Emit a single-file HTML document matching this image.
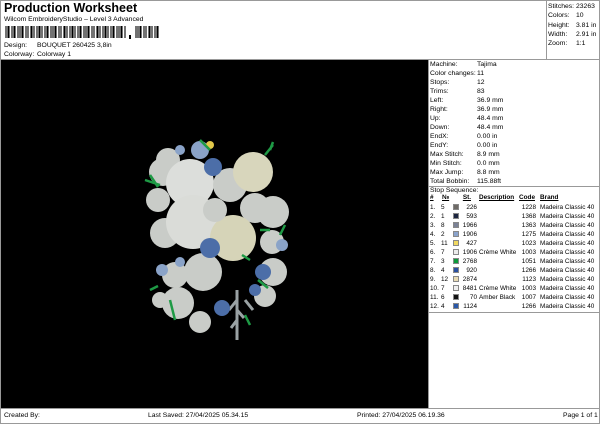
<!DOCTYPE html><html><head><meta charset="utf-8"><style>
*{margin:0;padding:0;box-sizing:border-box}
body{width:600px;height:424px;background:#fff;font-family:"Liberation Sans",sans-serif;font-size:6.8px;color:#000;position:relative;overflow:hidden}
.a{position:absolute;white-space:nowrap}
.t{font-size:6.4px}
.l{position:absolute;background:#999}
.sw{position:absolute;width:6px;height:6px;border:1px solid #888}
</style></head><body>
<div class="a" style="left:4px;top:1px;font-size:12.5px;font-weight:bold">Production Worksheet</div>
<div class="a" style="left:4px;top:16px">Wilcom EmbroideryStudio – Level 3 Advanced</div>
<svg class="a" style="left:4px;top:26px" width="160" height="14">
<path d="M2 0v12M4 0v12M5 0v12M8 0v12M10 0v12M11 0v12M14 0v12M16 0v12M18 0v12M19 0v12M22 0v12M24 0v12M27 0v12M28 0v12M30 0v12M33 0v12M35 0v12M36 0v12M38 0v12M41 0v12M43 0v12M44 0v12M47 0v12M49 0v12M51 0v12M52 0v12M55 0v12M57 0v12M60 0v12M61 0v12M63 0v12M66 0v12M68 0v12M69 0v12M71 0v12M74 0v12M76 0v12M77 0v12M80 0v12M82 0v12M84 0v12M85 0v12M88 0v12M90 0v12M93 0v12M94 0v12M96 0v12M99 0v12M101 0v12M102 0v12M104 0v12M107 0v12M109 0v12M110 0v12M113 0v12M115 0v12M117 0v12M118 0v12M121 0v12M132 0v12M134 0v12M136 0v12M137 0v12M140 0v12M142 0v12M145 0v12M146 0v12M148 0v12M151 0v12M153 0v12M154 0v12" stroke="#000" stroke-width="1.1"/>
<rect x="125" y="9" width="2" height="4" fill="#000"/></svg>
<div class="a" style="left:4px;top:42px">Design:</div><div class="a" style="left:37px;top:42px">BOUQUET 260425 3,8in</div>
<div class="a" style="left:4px;top:51px">Colorway:</div><div class="a" style="left:37px;top:51px">Colorway 1</div>
<div class="l" style="left:546px;top:0;width:1px;height:59px"></div>
<div class="l" style="left:0;top:59px;width:600px;height:1px"></div>
<div class="l" style="left:599px;top:0;width:1px;height:424px"></div>
<div class="l" style="left:0;top:0;width:600px;height:1px"></div>
<div class="a" style="left:548px;top:2px;line-height:9.3px">Stitches:<br>Colors:<br>Height:<br>Width:<br>Zoom:</div>
<div class="a" style="left:576px;top:2px;line-height:9.3px">23263<br>10<br>3.81 in<br>2.91 in<br>1:1</div>
<div class="a" style="left:0;top:60px;width:428px;height:348px;background:#000"></div>
<svg class="a" style="left:0;top:60px" width="428" height="348" viewBox="0 60 428 348">
<path d="M237 290v50M237 300l-8 10M237 310l7 8M237 320l-6 8M245 300l8 10" stroke="#9aa2a4" stroke-width="3" fill="none"/>
<g fill="#c9ccc8">
<circle cx="168" cy="160" r="12"/><circle cx="163" cy="172" r="14"/><circle cx="158" cy="200" r="12"/><circle cx="165" cy="233" r="15"/>
<circle cx="200" cy="150" r="9" fill="#8aa3c8"/>
<circle cx="190" cy="183" r="24" fill="#dcdedb"/><circle cx="193" cy="222" r="27" fill="#dadcd8"/>
<circle cx="230" cy="185" r="17"/><circle cx="255" cy="208" r="15"/>
<circle cx="253" cy="172" r="20" fill="#d8d6bc"/><circle cx="233" cy="238" r="23" fill="#d6d4b8"/>
<circle cx="273" cy="212" r="16"/><circle cx="272" cy="242" r="12"/><circle cx="273" cy="272" r="14"/><circle cx="265" cy="296" r="11"/>
<circle cx="203" cy="272" r="19"/><circle cx="175" cy="275" r="13"/><circle cx="178" cy="303" r="16"/><circle cx="200" cy="322" r="11"/><circle cx="160" cy="300" r="8"/>
<circle cx="215" cy="210" r="12"/>
</g>
<g fill="#4c6ea8"><circle cx="213" cy="167" r="9"/><circle cx="210" cy="248" r="10"/><circle cx="263" cy="272" r="8"/><circle cx="222" cy="308" r="8"/><circle cx="255" cy="290" r="6"/><circle cx="180" cy="150" r="5" fill="#8aa3c8"/><circle cx="162" cy="270" r="6" fill="#8aa3c8"/><circle cx="282" cy="245" r="6" fill="#8aa3c8"/><circle cx="180" cy="262" r="5" fill="#8aa3c8"/></g>
<circle cx="210" cy="145" r="4" fill="#e2c84a"/>
<g stroke="#1e9a45" stroke-width="2.5" fill="none"><path d="M145 180l15 5M150 175l8 12M265 155l8-10M270 150l3-8M200 140l10 10M242 255l8 5M170 300l5 20M258 280l10 8M285 225l-5 10M260 230l10 0M150 290l8-4M245 315l5 10"/></g>
</svg>
<div class="a" style="left:430px;top:60px;line-height:9px">Machine:<br>Color changes:<br>Stops:<br>Trims:<br>Left:<br>Right:<br>Up:<br>Down:<br>EndX:<br>EndY:<br>Max Stitch:<br>Min Stitch:<br>Max Jump:<br>Total Bobbin:</div>
<div class="a" style="left:477px;top:60px;line-height:9px">Tajima<br>11<br>12<br>83<br>36.9 mm<br>36.9 mm<br>48.4 mm<br>48.4 mm<br>0.00 in<br>0.00 in<br>8.9 mm<br>0.0 mm<br>8.8 mm<br>115.88ft</div>
<div class="l" style="left:428px;top:186px;width:172px;height:1px"></div>
<div class="l" style="left:428px;top:59px;width:1px;height:350px"></div>
<div class="a" style="left:430px;top:187px">Stop Sequence:</div>
<div class="a t" style="left:430px;top:194px;font-weight:bold;text-decoration:underline">#</div>
<div class="a t" style="left:442px;top:194px;font-weight:bold;text-decoration:underline">№</div>
<div class="a t" style="left:461px;top:194px;width:10px;text-align:right;font-weight:bold;text-decoration:underline">St.</div>
<div class="a t" style="left:479px;top:194px;font-weight:bold;text-decoration:underline">Description</div>
<div class="a t" style="left:519px;top:194px;width:16px;text-align:right;font-weight:bold;text-decoration:underline">Code</div>
<div class="a t" style="left:540px;top:194px;font-weight:bold;text-decoration:underline">Brand</div>
<div class="a t" style="left:430px;top:203px;line-height:9px">1.<br>2.<br>3.<br>4.<br>5.<br>6.<br>7.<br>8.<br>9.<br>10.<br>11.<br>12.</div>
<div class="a t" style="left:441px;top:203px;line-height:9px">5<br>1<br>8<br>2<br>11<br>7<br>3<br>4<br>12<br>7<br>6<br>4</div>
<div class="a t" style="left:450px;top:203px;width:27px;text-align:right;line-height:9px">226<br>593<br>1966<br>1906<br>427<br>1906<br>2768<br>920<br>2874<br>8481<br>70<br>1124</div>
<div class="a t" style="left:479px;top:203px;line-height:9px"><br><br><br><br><br>Crème White<br><br><br><br>Crème White<br>Amber Black<br></div>
<div class="a t" style="left:515px;top:203px;width:21px;text-align:right;line-height:9px">1228<br>1368<br>1363<br>1275<br>1023<br>1003<br>1051<br>1266<br>1123<br>1003<br>1007<br>1266</div>
<div class="a t" style="left:540px;top:203px;line-height:9px">Madeira Classic 40<br>Madeira Classic 40<br>Madeira Classic 40<br>Madeira Classic 40<br>Madeira Classic 40<br>Madeira Classic 40<br>Madeira Classic 40<br>Madeira Classic 40<br>Madeira Classic 40<br>Madeira Classic 40<br>Madeira Classic 40<br>Madeira Classic 40</div>
<div class="sw" style="left:453px;top:204px;background:#6e6a66"></div>
<div class="sw" style="left:453px;top:213px;background:#1c2540"></div>
<div class="sw" style="left:453px;top:222px;background:#7b8296"></div>
<div class="sw" style="left:453px;top:231px;background:#8aa3cc"></div>
<div class="sw" style="left:453px;top:240px;background:#f0d860"></div>
<div class="sw" style="left:453px;top:249px;background:#ececec"></div>
<div class="sw" style="left:453px;top:258px;background:#0c9a3a"></div>
<div class="sw" style="left:453px;top:267px;background:#2a50a0"></div>
<div class="sw" style="left:453px;top:276px;background:#eadcb4"></div>
<div class="sw" style="left:453px;top:285px;background:#f0f0f0"></div>
<div class="sw" style="left:453px;top:294px;background:#111"></div>
<div class="sw" style="left:453px;top:303px;background:#2a58a8"></div>
<div class="l" style="left:428px;top:312px;width:172px;height:1px"></div>
<div class="l" style="left:0;top:408px;width:600px;height:1px"></div>
<div class="l" style="left:0;top:0;width:1px;height:424px"></div>
<div class="l" style="left:0;top:423px;width:600px;height:1px"></div>
<div class="a" style="left:4px;top:412px">Created By:</div>
<div class="a" style="left:148px;top:412px">Last Saved: 27/04/2025 05.34.15</div>
<div class="a" style="left:357px;top:412px">Printed: 27/04/2025 06.19.36</div>
<div class="a" style="left:563px;top:412px">Page 1 of 1</div>
</body></html>
